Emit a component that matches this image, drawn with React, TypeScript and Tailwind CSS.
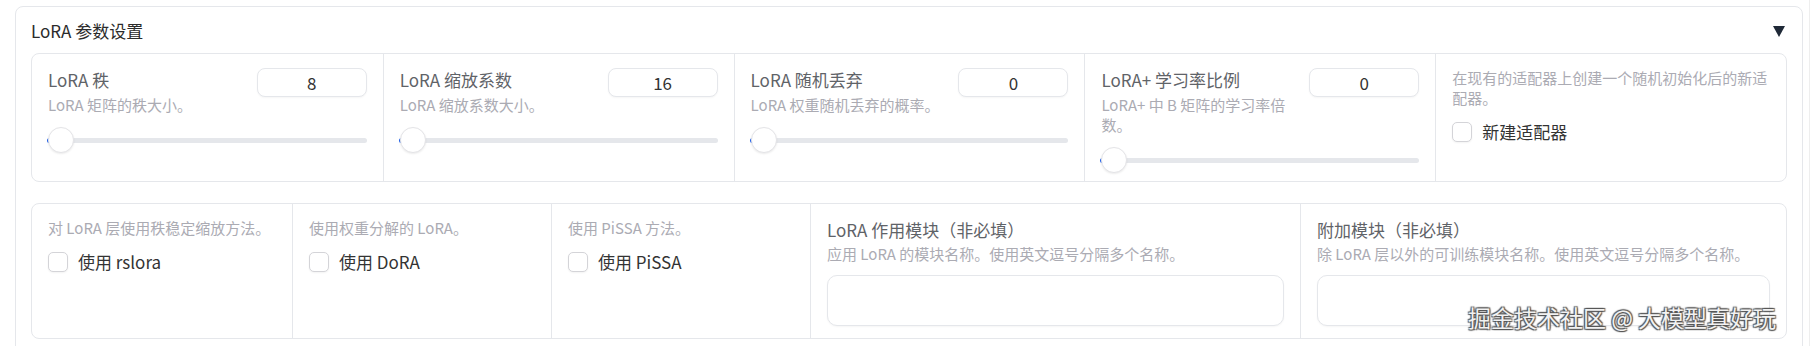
import React, { FC } from "react";

const font = "font-['Noto_Sans_CJK_SC','Noto_Sans',sans-serif]";

const Slider: FC = () => {
  return (
    <div className="relative mt-3 h-[26px]">
      <div className="absolute left-0 right-0 top-[10.5px] h-[5px] rounded-full bg-[#e5e7eb]" />
      <div className="absolute -left-px top-[10.5px] h-[5px] w-[8px] rounded-l-full bg-[#2563eb]" />
      <div className="absolute left-0 top-0 h-[26px] w-[26px] rounded-full border border-[#e4e4e7] bg-white shadow-[0_1px_2px_rgba(0,0,0,0.08)]" />
    </div>
  );
};

const NumberSlider: FC<{ label: string; desc: string; value: string; first?: boolean }> = ({
  label,
  desc,
  value,
  first,
}) => {
  return (
    <div className={`px-4 pb-2 pt-[14px] ${first ? "" : "border-l border-[#e5e7eb]"}`}>
      <div className="flex items-start gap-2">
        <div className="min-w-0 flex-1">
          <div className="text-[17px] leading-6 text-[#5f6368]">{label}</div>
          <div className="mt-[3px] text-[15px] leading-5 text-[#ababb3]">{desc}</div>
        </div>
        <div className="flex h-[29px] w-[110px] shrink-0 items-center justify-center rounded-lg border border-[#e5e7eb] bg-white text-[17px] text-[#333333] shadow-[0_1px_2px_rgba(0,0,0,0.04)]">
          {value}
        </div>
      </div>
      <Slider />
    </div>
  );
};

const Checkbox: FC<{ label: string }> = ({ label }) => {
  return (
    <div className="mt-3 flex h-6 items-center gap-2.5">
      <div className="h-5 w-5 shrink-0 rounded-[5px] border border-[#d4d4d8] bg-white shadow-[0_1px_2px_rgba(0,0,0,0.05)]" />
      <span className="text-[17px] leading-6 text-[#333333]">{label}</span>
    </div>
  );
};

const CheckField: FC<{ desc: string; label: string; first?: boolean }> = ({ desc, label, first }) => {
  return (
    <div className={`px-4 pt-[14px] ${first ? "" : "border-l border-[#e5e7eb]"}`}>
      <div className="text-[15px] leading-5 text-[#ababb3]">{desc}</div>
      <Checkbox label={label} />
    </div>
  );
};

const TextField: FC<{ label: string; desc: string }> = ({ label, desc }) => {
  return (
    <div className="border-l border-[#e5e7eb] px-4 pb-3 pt-[14px]">
      <div className="text-[17px] leading-6 text-[#5f6368]">{label}</div>
      <div className="mt-[2px] text-[15px] leading-5 text-[#ababb3]">{desc}</div>
      <div className="mt-[11px] h-[51px] rounded-[10px] border border-[#e5e7eb] bg-white shadow-[0_1px_2px_rgba(0,0,0,0.04)]" />
    </div>
  );
};

const App: FC = () => {
  return (
    <div className={`relative flex h-[346px] w-[1819px] overflow-hidden bg-white ${font}`}>
      <section className="ml-[15px] mt-1.5 h-[360px] w-[1788px] shrink-0 rounded-lg border border-[#e5e7eb] bg-white px-[15px] pt-3">
        <div className="flex h-6 items-center justify-between">
          <span className="text-[17px] leading-6 text-[#2b2b2b]">LoRA 参数设置</span>
          <svg width="12" height="11" viewBox="0 0 12 11" className="mr-[2px]">
            <polygon points="0,0 12,0 6,11" fill="#1f2937" />
          </svg>
        </div>

        <div className="mt-[10px] grid grid-cols-5 rounded-lg border border-[#e5e7eb]">
          <NumberSlider first label="LoRA 秩" desc="LoRA 矩阵的秩大小。" value="8" />
          <NumberSlider label="LoRA 缩放系数" desc="LoRA 缩放系数大小。" value="16" />
          <NumberSlider label="LoRA 随机丢弃" desc="LoRA 权重随机丢弃的概率。" value="0" />
          <NumberSlider label="LoRA+ 学习率比例" desc="LoRA+ 中 B 矩阵的学习率倍数。" value="0" />
          <CheckField desc="在现有的适配器上创建一个随机初始化后的新适配器。" label="新建适配器" />
        </div>

        <div className="mt-[21px] grid grid-cols-[260px_259px_259px_490px_1fr] rounded-lg border border-[#e5e7eb]">
          <CheckField first desc="对 LoRA 层使用秩稳定缩放方法。" label="使用 rslora" />
          <CheckField desc="使用权重分解的 LoRA。" label="使用 DoRA" />
          <CheckField desc="使用 PiSSA 方法。" label="使用 PiSSA" />
          <TextField label="LoRA 作用模块（非必填）" desc="应用 LoRA 的模块名称。使用英文逗号分隔多个名称。" />
          <TextField label="附加模块（非必填）" desc="除 LoRA 层以外的可训练模块名称。使用英文逗号分隔多个名称。" />
        </div>
      </section>

      <div className="ml-[6px] h-full w-px bg-[#eeeeee]" />

      <div className="absolute left-[1468px] top-[301px] text-[23px] leading-8 text-[#f2f2f2] [text-shadow:1px_1px_1px_#555,-1px_-1px_1px_#555,1px_-1px_1px_#555,-1px_1px_1px_#555]">
        掘金技术社区 @ 大模型真好玩
      </div>
    </div>
  );
};

export default App;
